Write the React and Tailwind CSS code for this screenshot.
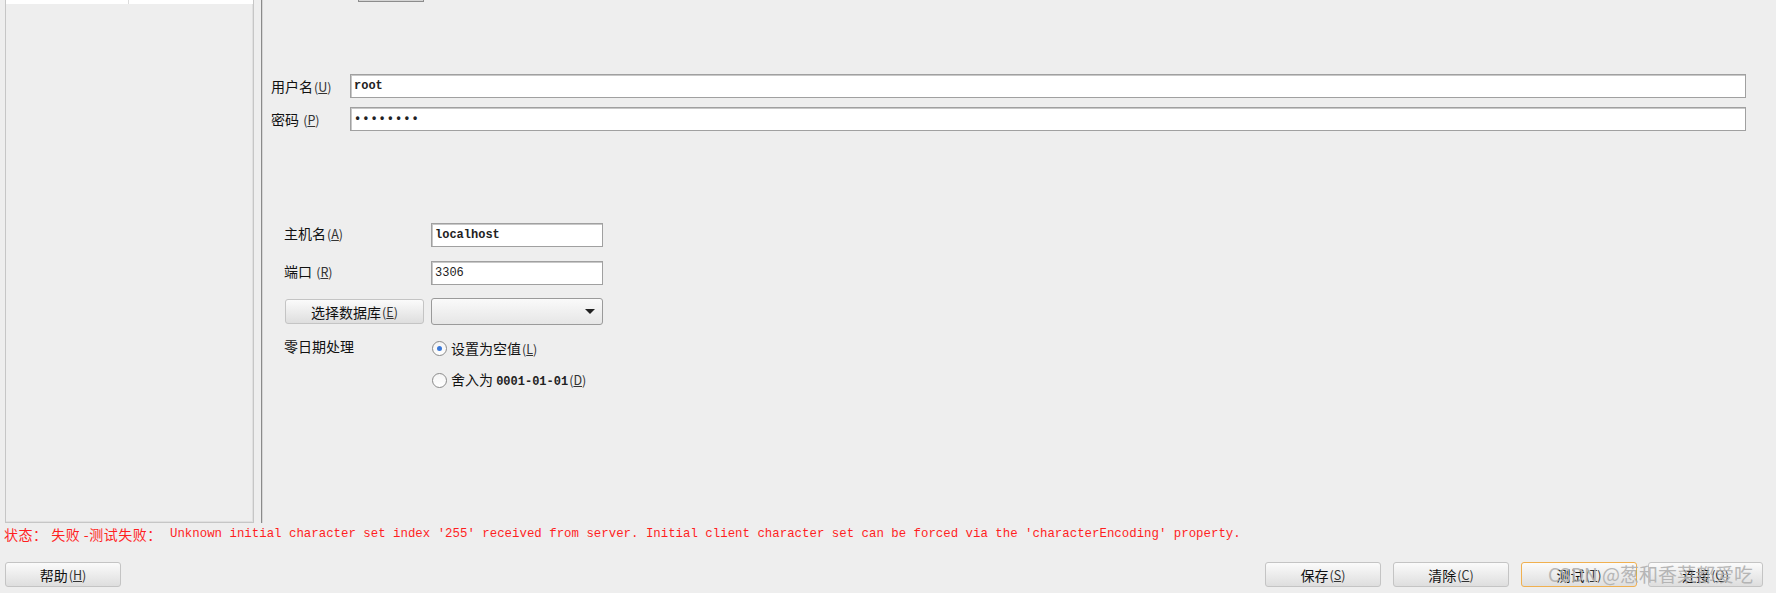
/* MySQL 连接设置面板 */
const Mn = ({ k }) => (
  <span className="text-[12.5px] ml-[1px] text-[#333]">
    (<span className="underline">{k}</span>)
  </span>
)

const Btn = ({ children, active, className = '' }) => (
  <button
    className={`h-[25px] rounded-[3px] border bg-gradient-to-b from-[#fbfbfb] to-[#dedede] text-[14px] leading-[16px] text-[#111] flex items-center justify-center ${
      active ? 'border-[#f0b050]' : 'border-[#c4c4c4]'
    } ${className}`}
  >
    {children}
  </button>
)

const Radio = ({ checked }) => (
  <div className="w-[15px] h-[15px] rounded-full border border-[#8a8a8a] bg-gradient-to-b from-[#f4f4f4] to-[#ffffff] flex items-center justify-center">
    {checked && <div className="w-[5px] h-[5px] rounded-full bg-[#3a78d8]" />}
  </div>
)

const Field = ({ value, className = '' }) => (
  <div className={`h-[24px] bg-white border border-[#a0a0a0] shadow-[inset_1px_1px_0_#c8c8c8] flex items-center pl-[3px] font-['Liberation_Mono',monospace] text-[12px] font-bold text-[#222] ${className}`}>
    {value}
  </div>
)

export default function App() {
  return (
    <div className="w-[1776px] h-[593px] bg-[#eeeeee] relative overflow-hidden flex flex-col font-['Noto_Sans_CJK_SC',sans-serif] text-[#111]">
      <div className="flex h-[523px]">
        {/* 左侧列表 */}
        <div className="ml-[5px] w-[249px] h-[523px] border border-t-0 border-[#c6c6c6] shadow-[inset_-1px_-1px_0_#e0e0e0] flex flex-col">
          <div className="h-[4px] bg-white flex">
            <div className="w-[123px] border-r border-[#dcdcdc]" />
          </div>
        </div>
        <div className="ml-[7px] w-[2px] h-[523px] border-l border-[#8a8a8a] bg-[#d6d6d6]" />

        {/* 右侧表单 */}
        <div className="flex-1 flex flex-col">
          <div className="ml-[95px] w-[66px] h-[2px] border border-t-0 border-[#8c8c8c] bg-[#d5d5d5]" />

          <div className="mt-[72px] flex items-center">
            <div className="ml-[8px] w-[79px] text-[14px] leading-[16px]">用户名<Mn k="U" /></div>
            <Field value="root" className="w-[1396px]" />
          </div>
          <div className="mt-[9px] flex items-center">
            <div className="ml-[8px] w-[79px] text-[14px] leading-[16px]">密码 <Mn k="P" /></div>
            <Field value="••••••••" className="w-[1396px] tracking-[1px]" />
          </div>

          <div className="mt-[92px] flex items-center">
            <div className="ml-[21px] w-[147px] text-[14px] leading-[16px] -mt-[4px]">主机名<Mn k="A" /></div>
            <Field value="localhost" className="w-[172px]" />
          </div>
          <div className="mt-[14px] flex items-center">
            <div className="ml-[21px] w-[147px] text-[14px] leading-[16px] -mt-[4px]">端口 <Mn k="R" /></div>
            <Field value="3306" className="w-[172px] font-normal" />
          </div>
          <div className="mt-[13px] flex items-center">
            <Btn className="ml-[22px] w-[139px]">选择数据库 <Mn k="E" /></Btn>
            <div className="ml-[7px] w-[172px] h-[27px] rounded-[3px] border border-[#9a9a9a] bg-gradient-to-b from-[#fafafa] to-[#e6e6e6] flex items-center justify-end pr-[7px]">
              <div className="w-0 h-0 border-l-[5px] border-r-[5px] border-t-[5px] border-l-transparent border-r-transparent border-t-[#222]" />
            </div>
          </div>
          <div className="mt-[13px] flex items-start">
            <div className="ml-[21px] w-[148px] text-[14px] leading-[16px]">零日期处理</div>
            <div className="flex flex-col gap-[14px] pt-[2px]">
              <div className="flex items-center gap-[4px] text-[14px] leading-[16px]">
                <Radio checked />
                <span>设置为空值<Mn k="L" /></span>
              </div>
              <div className="flex items-center gap-[4px] text-[14px] leading-[16px]">
                <Radio />
                <span>
                  舍入为 <span className="font-['Liberation_Mono',monospace] text-[12px] font-bold text-[#222]">0001-01-01</span>
                  <Mn k="D" />
                </span>
              </div>
            </div>
          </div>
        </div>
      </div>

      {/* 状态 */}
      <div className="mt-[1px] h-[20px] pl-[4px] flex items-center text-[#ff1f1f] whitespace-nowrap">
        <span className="text-[14px] tracking-[0.5px] w-[166px] shrink-0">状态： 失败 -测试失败：</span>
        <span className="font-['Liberation_Mono',monospace] text-[12.4px]">
          Unknown initial character set index '255' received from server. Initial client character set can be forced via the 'characterEncoding' property.
        </span>
      </div>

      {/* 底部按钮 */}
      <div className="mt-[18px] flex items-center">
        <Btn className="ml-[5px] w-[116px]">帮助 <Mn k="H" /></Btn>
        <div className="ml-auto mr-[13px] flex gap-[12px]">
          <Btn className="w-[116px]">保存 <Mn k="S" /></Btn>
          <Btn className="w-[116px]">清除 <Mn k="C" /></Btn>
          <Btn active className="w-[116px]">测试 <Mn k="T" /></Btn>
          <Btn className="w-[115px] -ml-[1px]">连接 <Mn k="O" /></Btn>
        </div>
      </div>

      {/* 水印 */}
      <div className="absolute left-[1548px] top-[561px] text-[19px] leading-[26px] text-[#b0b0b0] opacity-90 whitespace-nowrap pointer-events-none">
        CSDN @葱和香菜都爱吃
      </div>
    </div>
  )
}
